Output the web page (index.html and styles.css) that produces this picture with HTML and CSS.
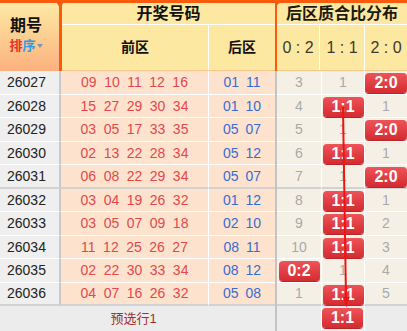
FILE: index.html
```html
<!DOCTYPE html>
<html lang="zh-CN">
<head>
<meta charset="utf-8">
<title>后区质合比分布</title>
<link rel="stylesheet" href="styles.css">
</head>
<body>
<div class="board">
  <div class="head">
    <div class="h-id">
      <div class="h-id-title">期号</div>
      <div class="sort"><span class="sort-r">排</span><span class="sort-b">序</span><i class="caret"></i></div>
    </div>
    <div class="h-draw">
      <div class="h-draw-title">开奖号码</div>
      <div class="h-draw-sub"><div class="h-front">前区</div><div class="h-back">后区</div></div>
    </div>
    <div class="h-dist">
      <div class="h-dist-inner">
        <div class="h-dist-title">后区质合比分布</div>
        <div class="h-dist-sub"><div class="hs hs1">0 : 2</div><div class="hs hs2">1 : 1</div><div class="hs hs3">2 : 0</div></div>
      </div>
    </div>
  </div>
  <div class="body">
    <div class="left">
      <div class="row"><div class="id">26027</div><div class="front"><span>09</span><span>10</span><span>11</span><span>12</span><span>16</span></div><div class="back"><span>01</span><span>11</span></div></div>
      <div class="row"><div class="id">26028</div><div class="front"><span>15</span><span>27</span><span>29</span><span>30</span><span>34</span></div><div class="back"><span>01</span><span>10</span></div></div>
      <div class="row"><div class="id">26029</div><div class="front"><span>03</span><span>05</span><span>17</span><span>33</span><span>35</span></div><div class="back"><span>05</span><span>07</span></div></div>
      <div class="row"><div class="id">26030</div><div class="front"><span>02</span><span>13</span><span>22</span><span>28</span><span>34</span></div><div class="back"><span>05</span><span>12</span></div></div>
      <div class="row sep"><div class="id">26031</div><div class="front"><span>06</span><span>08</span><span>22</span><span>29</span><span>34</span></div><div class="back"><span>05</span><span>07</span></div></div>
      <div class="row"><div class="id">26032</div><div class="front"><span>03</span><span>04</span><span>19</span><span>26</span><span>32</span></div><div class="back"><span>01</span><span>12</span></div></div>
      <div class="row"><div class="id">26033</div><div class="front"><span>03</span><span>05</span><span>07</span><span>09</span><span>18</span></div><div class="back"><span>02</span><span>10</span></div></div>
      <div class="row"><div class="id">26034</div><div class="front"><span>11</span><span>12</span><span>25</span><span>26</span><span>27</span></div><div class="back"><span>08</span><span>11</span></div></div>
      <div class="row"><div class="id">26035</div><div class="front"><span>02</span><span>22</span><span>30</span><span>33</span><span>34</span></div><div class="back"><span>08</span><span>12</span></div></div>
      <div class="row sep"><div class="id">26036</div><div class="front"><span>04</span><span>07</span><span>16</span><span>26</span><span>32</span></div><div class="back"><span>05</span><span>08</span></div></div>
      <div class="foot-left">预选行1</div>
    </div>
    <div class="right">
      <div class="row"><div class="r r1">3</div><div class="r r2">1</div><div class="r r3"><b class="badge">2:0</b></div></div>
      <div class="row"><div class="r r1">4</div><div class="r r2"><b class="badge">1:1</b></div><div class="r r3">1</div></div>
      <div class="row"><div class="r r1">5</div><div class="r r2">1</div><div class="r r3"><b class="badge">2:0</b></div></div>
      <div class="row"><div class="r r1">6</div><div class="r r2"><b class="badge">1:1</b></div><div class="r r3">1</div></div>
      <div class="row sep"><div class="r r1">7</div><div class="r r2">1</div><div class="r r3"><b class="badge">2:0</b></div></div>
      <div class="row"><div class="r r1">8</div><div class="r r2"><b class="badge">1:1</b></div><div class="r r3">1</div></div>
      <div class="row"><div class="r r1">9</div><div class="r r2"><b class="badge">1:1</b></div><div class="r r3">2</div></div>
      <div class="row"><div class="r r1">10</div><div class="r r2"><b class="badge">1:1</b></div><div class="r r3">3</div></div>
      <div class="row"><div class="r r1"><b class="badge">0:2</b></div><div class="r r2">1</div><div class="r r3">4</div></div>
      <div class="row sep"><div class="r r1">1</div><div class="r r2"><b class="badge">1:1</b></div><div class="r r3">5</div></div>
      <div class="foot-right"><div class="r r1"></div><div class="r r2"><b class="badge">1:1</b></div><div class="r r3"></div></div>
    </div>
  </div>
  <svg class="trend" width="407" height="331" viewBox="0 0 407 331">
    <line x1="343" y1="107" x2="346" y2="299" stroke="#ee1414" stroke-width="2"/>
    <polygon points="342.6,297 349.6,297 346.3,307.5" fill="#ee1414"/>
  </svg>
</div>
</body>
</html>
```
FILE: styles.css
```css
* { box-sizing: border-box; }
body {
  margin: 0;
  background: #fff;
  font-family: "Liberation Sans", "Noto Sans CJK SC", sans-serif;
}
.board {
  position: relative;
  width: 407px;
  height: 331px;
  overflow: hidden;
}
.head {
  display: flex;
  height: 71px;
  border-top: 3px solid #f95a0c;
}
.h-id {
  position: relative;
  width: 62px;
  border-right: 3px solid #f95a0c;
  background: linear-gradient(#fde9a4, #fcb17f);
  padding: 12px 7px 0 0;
  text-align: center;
}
.h-id::before {
  content: "";
  position: absolute;
  left: 55px;
  top: -3px;
  border-left: 5.5px solid transparent;
  border-right: 5.5px solid transparent;
  border-top: 8px solid #f95a0c;
}
.h-id-title {
  font-size: 16px;
  font-weight: bold;
  line-height: 22px;
  color: #111;
}
.sort {
  margin-top: 1px;
  font-size: 13px;
  font-weight: bold;
  line-height: 16px;
  display: flex;
  justify-content: center;
  align-items: center;
}
.sort-r { color: #e3332a; }
.sort-b { color: #2f9be6; }
.caret {
  margin-left: 1px;
  border-left: 3.5px solid transparent;
  border-right: 3.5px solid transparent;
  border-top: 4px solid #7f97aa;
}
.h-draw {
  width: 213px;
  background: #fde8a2;
  display: flex;
  flex-direction: column;
}
.h-draw-title {
  height: 22px;
  line-height: 21px;
  border-bottom: 1px solid #fff;
  text-align: center;
  font-size: 16px;
  font-weight: bold;
  color: #111;
}
.h-draw-sub {
  display: flex;
  height: 46px;
  border-bottom: 1px solid #fbc88c;
}
.h-front, .h-back {
  font-size: 14px;
  font-weight: bold;
  line-height: 45px;
  text-align: center;
  color: #111;
}
.h-front {
  width: 147px;
  border-right: 1px solid #fff;
}
.h-back { flex: 1; }
.h-dist {
  width: 132px;
  background: #f95a0c;
  padding-left: 2px;
}
.h-dist-inner {
  height: 100%;
  background: #fde8a2;
  border-top-left-radius: 4px;
}
.h-dist-title {
  height: 22px;
  line-height: 21px;
  border-bottom: 1px solid #fff;
  text-align: center;
  font-size: 16px;
  font-weight: bold;
  color: #1a1a10;
}
.h-dist-sub {
  display: flex;
  height: 46px;
  border-bottom: 1px solid #fbc88c;
}
.hs {
  font-size: 16px;
  line-height: 46px;
  text-align: center;
  color: #3a3a30;
}
.hs1 { width: 43px; border-right: 1px solid #fff; }
.hs2 { width: 45px; border-right: 1px solid #fff; }
.hs3 { flex: 1; }

.body {
  display: flex;
  height: 260px;
}
.left { width: 275px; }
.right {
  width: 132px;
  border-left: 2px solid #c4c4c4;
}
.row {
  display: flex;
  height: 23.5px;
}
.row > div {
  height: 100%;
  border-bottom: 1px solid #fff;
  display: flex;
  align-items: center;
  font-size: 14px;
}
.row.sep > div { border-bottom: 2px solid #d2d2d2; }
.id {
  width: 61px;
  padding-left: 7px;
  background: #efefef;
  border-right: 2px solid #c9c9c9;
  color: #222;
}
.front, .back {
  justify-content: center;
  background: #fde3cd;
}
.front {
  width: 148px;
  gap: 7.5px;
  border-right: 1px solid #fff;
  color: #e3474c;
}
.back {
  width: 66px;
  gap: 7px;
  color: #3a6bd3;
}
.r {
  justify-content: center;
  align-items: flex-start;
  background: #f5f0e5;
  color: #a9a9a9;
  font-size: 14px;
}
.row > .r { align-items: center; }
.row > .r:has(.badge) { align-items: flex-start; }
.r1 { width: 45px; border-right: 1px solid #fff; }
.r2 { width: 43px; border-right: 1px solid #fff; }
.r3 { width: 42px; }
.badge {
  display: block;
  width: 41px;
  height: 20px;
  margin-top: 2px;
  border-radius: 4px;
  background: linear-gradient(#ee5458, #d42b30);
  box-shadow: 0 1px 0 #b8262a;
  color: #fff;
  font-size: 16px;
  font-weight: bold;
  line-height: 20px;
  text-align: center;
}
.r3 .badge { width: 42px; }
.foot-left {
  height: 25px;
  border-top: 0;
  background: #ececec;
  color: #a0302a;
  font-size: 13px;
  line-height: 25px;
  text-align: center;
  padding-right: 8px;
}
.foot-right {
  display: flex;
  height: 25px;
}
.foot-right .r {
  height: 100%;
  background: #ececec;
}
.trend {
  position: absolute;
  left: 0;
  top: 0;
  pointer-events: none;
}
```
